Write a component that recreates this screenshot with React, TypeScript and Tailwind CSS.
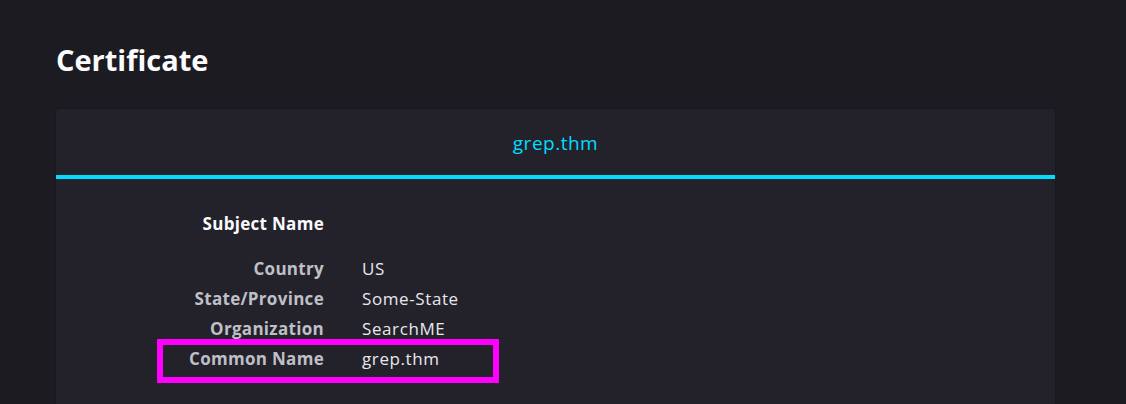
import React from "react";

const rows: [string, string][] = [
  ["Country", "US"],
  ["State/Province", "Some-State"],
  ["Organization", "SearchME"],
  ["Common Name", "grep.thm"],
];

export default function App() {
  return (
    <div
      className="relative w-[1126px] h-[404px] overflow-hidden bg-[#1c1b22] text-[#fbfbfe]"
      style={{ fontFamily: '"Open Sans", "Noto Sans", sans-serif' }}
    >
      <div className="pl-[56px] pr-[71px] pt-[43px]">
        <h1 className="text-[29px] font-bold leading-[34px] tracking-[0px]">Certificate</h1>
        <div className="mt-[32px] rounded-[4px] bg-[#23222b] shadow-[0_0_2px_rgba(0,0,0,0.3)]">
          <div className="h-[66px] flex items-center justify-center pt-[3px]">
            <span className="text-[19px] tracking-[0.5px] text-[#00ddff]">grep.thm</span>
          </div>
          <div className="h-[4px] bg-[#00ddff]" />
          <div className="pt-[33px] pb-[60px]">
            <div className="grid grid-cols-[268px_1fr] gap-x-[38px]">
              <div className="text-right text-[17px] font-bold leading-[24px] tracking-[0.3px] text-[#fbfbfe]">
                Subject Name
              </div>
              <div />
            </div>
            <div className="mt-[21px] grid grid-cols-[268px_1fr] gap-x-[38px] gap-y-[6px]">
              {rows.map(([k, v]) => (
                <React.Fragment key={k}>
                  <div className="text-right text-[17px] font-bold leading-[24px] tracking-[0.3px] text-[#bfbfc6]">
                    {k}
                  </div>
                  <div className="text-[17px] leading-[24px] tracking-[0.6px] text-[#e8e8ec]">{v}</div>
                </React.Fragment>
              ))}
            </div>
          </div>
        </div>
      </div>
      <div className="absolute left-[157px] top-[339px] w-[342px] h-[44px] border-[6px] border-[#ff00ff]" />
    </div>
  );
}
